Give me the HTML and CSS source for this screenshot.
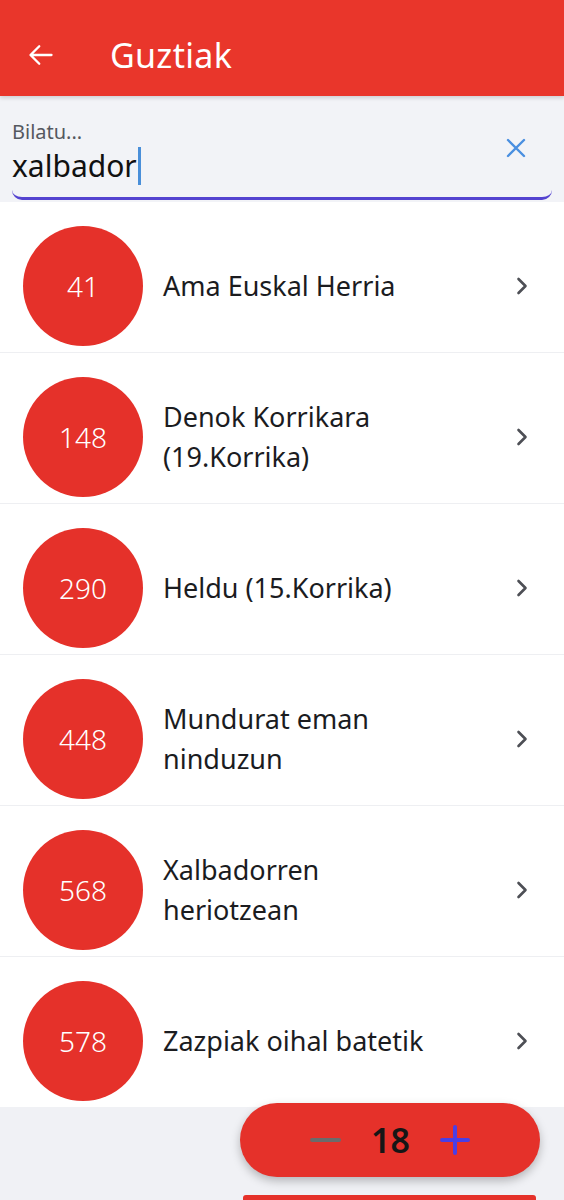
FILE: index.html
```html
<!DOCTYPE html>
<html lang="eu">
<head>
    <meta charset="UTF-8">
    <meta name="viewport" content="width=device-width, initial-scale=1.0">
    <title>Guztiak</title>
    <link rel="stylesheet" href="styles.css">
</head>
<body>
    <header class="app-bar">
        <button class="back-btn" aria-label="Atzera">
            <svg width="28" height="28" viewBox="0 0 24 24"><path d="M21 12H3.5M10.5 4.5L3 12l7.5 7.5" fill="none" stroke="#fff" stroke-width="2" stroke-linecap="round" stroke-linejoin="round"/></svg>
        </button>
        <h1>Guztiak</h1>
    </header>

    <div class="search">
        <div class="search-field">
            <div class="search-text">
                <label for="searchInput">Bilatu...</label>
                <div class="search-value">xalbador<span class="caret"></span></div>
            </div>
            <button class="clear-btn" aria-label="Garbitu">
                <svg width="20" height="20" viewBox="0 0 20 20"><path d="M2 2l16 16M18 2L2 18" fill="none" stroke="#4a8fe0" stroke-width="2.4" stroke-linecap="round"/></svg>
            </button>
        </div>
    </div>

    <ul class="song-list">
        <li class="song">
            <span class="song-num">41</span>
            <span class="song-title">Ama Euskal Herria</span>
            <svg class="chevron" width="12" height="18" viewBox="0 0 12 18"><path d="M2.5 2l7 7-7 7" fill="none" stroke="#4d4f55" stroke-width="2.6" stroke-linecap="round" stroke-linejoin="round"/></svg>
        </li>
        <li class="song">
            <span class="song-num">148</span>
            <span class="song-title">Denok Korrikara (19.Korrika)</span>
            <svg class="chevron" width="12" height="18" viewBox="0 0 12 18"><path d="M2.5 2l7 7-7 7" fill="none" stroke="#4d4f55" stroke-width="2.6" stroke-linecap="round" stroke-linejoin="round"/></svg>
        </li>
        <li class="song">
            <span class="song-num">290</span>
            <span class="song-title">Heldu (15.Korrika)</span>
            <svg class="chevron" width="12" height="18" viewBox="0 0 12 18"><path d="M2.5 2l7 7-7 7" fill="none" stroke="#4d4f55" stroke-width="2.6" stroke-linecap="round" stroke-linejoin="round"/></svg>
        </li>
        <li class="song">
            <span class="song-num">448</span>
            <span class="song-title">Mundurat eman ninduzun</span>
            <svg class="chevron" width="12" height="18" viewBox="0 0 12 18"><path d="M2.5 2l7 7-7 7" fill="none" stroke="#4d4f55" stroke-width="2.6" stroke-linecap="round" stroke-linejoin="round"/></svg>
        </li>
        <li class="song">
            <span class="song-num">568</span>
            <span class="song-title">Xalbadorren heriotzean</span>
            <svg class="chevron" width="12" height="18" viewBox="0 0 12 18"><path d="M2.5 2l7 7-7 7" fill="none" stroke="#4d4f55" stroke-width="2.6" stroke-linecap="round" stroke-linejoin="round"/></svg>
        </li>
        <li class="song">
            <span class="song-num">578</span>
            <span class="song-title">Zazpiak oihal batetik</span>
            <svg class="chevron" width="12" height="18" viewBox="0 0 12 18"><path d="M2.5 2l7 7-7 7" fill="none" stroke="#4d4f55" stroke-width="2.6" stroke-linecap="round" stroke-linejoin="round"/></svg>
        </li>
    </ul>

    <div class="font-stepper">
        <span class="step-minus"></span>
        <span class="step-value">18</span>
        <span class="step-plus"></span>
    </div>
    <div class="bottom-bar"></div>
</body>
</html>
```

FILE: styles.css
```css
:root {
    --red: #e5312a;
    --header-red: #e9362b;
    --text-color: #1b1c1f;
    --field-bg: #f2f3f7;
    --page-bg: #f0f1f5;
    --accent: #5443d0;
}

* {
    box-sizing: border-box;
    margin: 0;
    padding: 0;
}

body {
    font-family: "Noto Sans", Lato, sans-serif;
    background-color: var(--page-bg);
    color: var(--text-color);
    min-height: 1200px;
    position: relative;
    overflow: hidden;
}

button {
    background: none;
    border: none;
    cursor: pointer;
    display: flex;
    align-items: center;
    justify-content: center;
}

.app-bar {
    height: 96px;
    background-color: var(--header-red);
    display: flex;
    align-items: center;
    padding: 14px 0 0 27px;
    box-shadow: 0 2px 4px rgba(0, 0, 0, 0.15);
    position: relative;
    z-index: 1;
}

.app-bar h1 {
    color: #fff;
    font-size: 34px;
    font-weight: 400;
    margin-left: 55px;
    letter-spacing: 0.3px;
}

.search {
    background-color: var(--field-bg);
    padding: 0 12px 2px;
}

.search-field {
    display: flex;
    align-items: center;
    height: 104px;
    border-bottom: 3px solid var(--accent);
    border-radius: 0 0 10px 10px;
    padding-top: 12px;
}

.search-text {
    flex: 1;
}

.search-text label {
    display: block;
    font-size: 20px;
    color: #55585f;
    line-height: 26px;
}

.search-value {
    font-size: 30px;
    line-height: 42px;
    color: #111;
    display: flex;
    align-items: center;
}

.caret {
    display: inline-block;
    width: 3px;
    height: 38px;
    background-color: #4a8fd9;
    margin-left: 1px;
}

.clear-btn {
    width: 44px;
    height: 44px;
    margin-right: 14px;
    margin-top: -10px;
}

.song-list {
    list-style: none;
    background-color: #fff;
}

.song {
    display: flex;
    align-items: center;
    padding: 24px 0 6px 23px;
    border-top: 1px solid #eeeff2;
}

.song:first-child {
    border-top: none;
}

.song-num {
    width: 120px;
    height: 120px;
    border-radius: 50%;
    background-color: var(--red);
    color: #fff;
    font-size: 28px;
    font-weight: 300;
    display: flex;
    align-items: center;
    justify-content: center;
    flex-shrink: 0;
}

.song-title {
    flex: 1;
    font-size: 27px;
    line-height: 40px;
    margin-left: 20px;
    padding-right: 60px;
}

.chevron {
    flex-shrink: 0;
    margin-right: 36px;
}

.font-stepper {
    position: absolute;
    left: 240px;
    top: 1103px;
    width: 300px;
    height: 74px;
    border-radius: 37px;
    background-color: var(--red);
    box-shadow: 0 4px 10px rgba(0, 0, 0, 0.25);
    display: flex;
    align-items: center;
    justify-content: center;
    gap: 30px;
}

.step-minus {
    width: 31px;
    height: 4px;
    background-color: #6b6b6b;
    border-radius: 2px;
}

.step-value {
    font-size: 34px;
    font-weight: 600;
    color: #161616;
}

.step-plus {
    width: 30px;
    height: 30px;
    position: relative;
}

.step-plus::before,
.step-plus::after {
    content: "";
    position: absolute;
    background-color: #4a3ee6;
    border-radius: 2px;
}

.step-plus::before {
    left: 0;
    top: 13px;
    width: 30px;
    height: 4px;
}

.step-plus::after {
    left: 13px;
    top: 0;
    width: 4px;
    height: 30px;
}

.bottom-bar {
    position: absolute;
    left: 243px;
    top: 1195px;
    width: 293px;
    height: 20px;
    background-color: var(--red);
    border-radius: 3px 3px 0 0;
}
```
